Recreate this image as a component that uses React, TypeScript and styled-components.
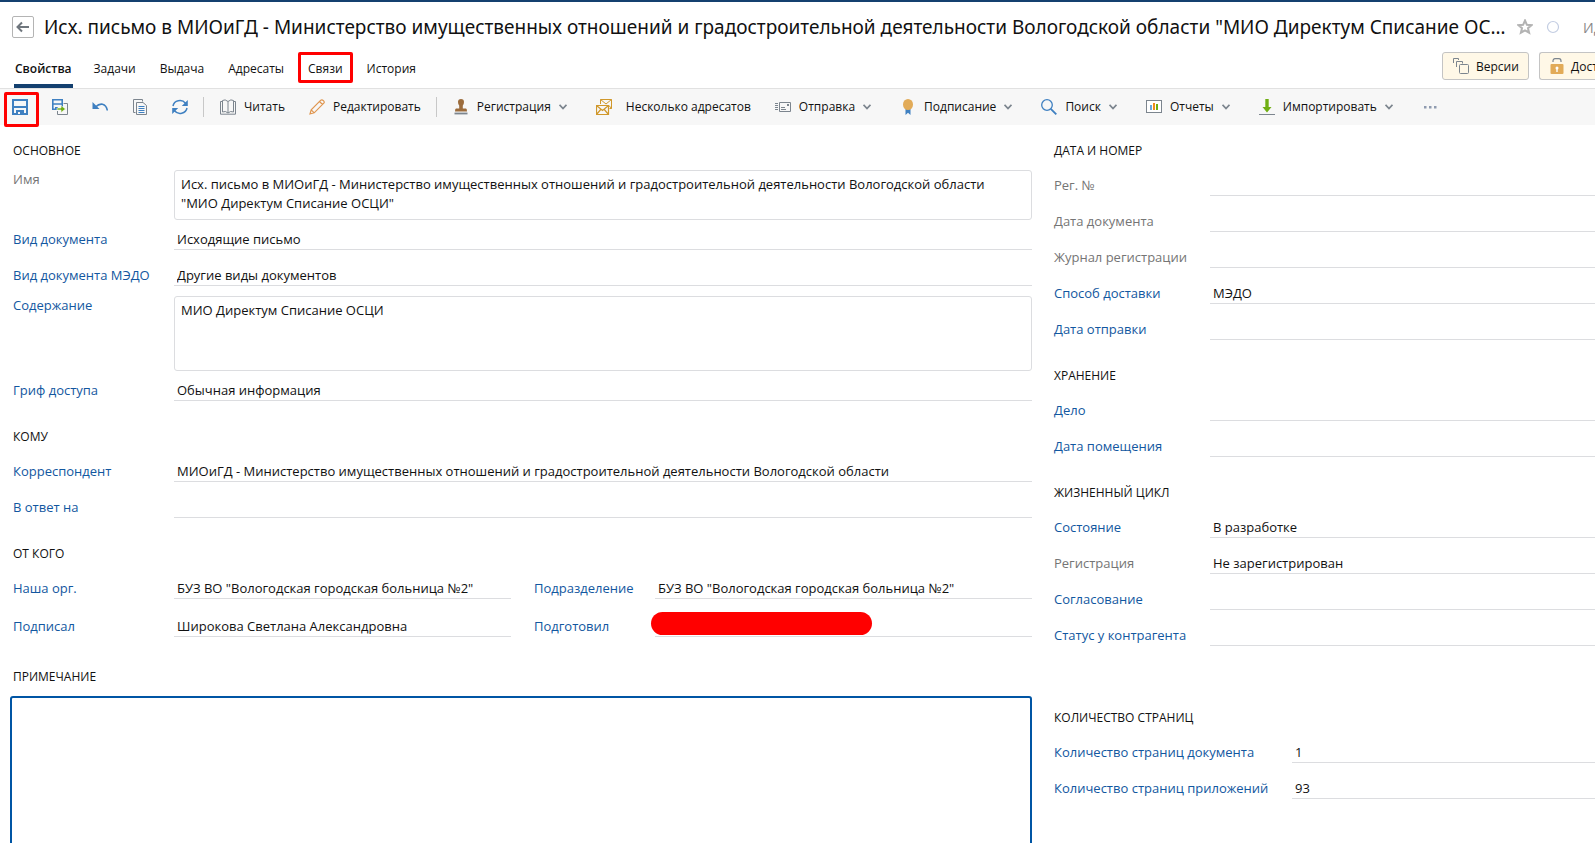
import React, { useId } from 'react';
import styled, { createGlobalStyle, css } from 'styled-components';

const GlobalStyle = createGlobalStyle`
  *, *::before, *::after { box-sizing: border-box; }
  html, body, #root { height: 100%; }
  body {
    margin: 0;
    overflow: hidden;
    background: #fff;
    color: #111;
    font-family: "Open Sans", "Noto Sans", sans-serif;
    font-size: 13px;
  }
  button, input, textarea { font: inherit; color: inherit; margin: 0; }
  button { cursor: pointer; }
`;

const Page = styled.div`
  min-height: 100%;
  border-top: 2px solid #14406f;
`;

const TitleRow = styled.header`
  display: flex;
  align-items: center;
  height: 50px;
  padding-left: 12px;
`;

const BackButton = styled.button`
  flex: none;
  display: grid;
  place-items: center;
  width: 22px;
  height: 22px;
  padding: 0;
  border: 1px solid #b4b4b4;
  border-radius: 2px;
  background: #fff;
`;

const Title = styled.h1`
  flex: 1;
  min-width: 0;
  margin: 0 0 0 10px;
  overflow: hidden;
  white-space: nowrap;
  font-family: "Noto Sans", "Open Sans", sans-serif;
  font-size: 19px;
  font-weight: 400;
  line-height: 26px;
`;

const PlainButton = styled.button`
  flex: none;
  display: grid;
  place-items: center;
  width: 16px;
  height: 16px;
  padding: 0;
  border: 0;
  background: none;
`;

const TitleMarks = styled.div`
  flex: none;
  display: flex;
  align-items: center;
  gap: 12px;
`;

const DocumentId = styled.span`
  width: 12px;
  margin-left: 10px;
  overflow: hidden;
  white-space: nowrap;
  color: #888;
  font-size: 14px;
`;

const TabRow = styled.div`
  display: flex;
  justify-content: space-between;
  height: 37px;
  padding-left: 3px;
  border-bottom: 1px solid #e1e1e1;
`;

const TabList = styled.nav`
  display: flex;
`;

const Tab = styled.button<{ $active?: boolean }>`
  position: relative;
  display: flex;
  height: 36px;
  padding: 0 ${p => (p.$active ? '9px' : '11px')} 0 11px;
  border: 0;
  background: none;
  font-size: 12px;
  line-height: 33px;
  font-weight: ${p => (p.$active ? 600 : 400)};

  span {
    padding: 0 1px;
    border-bottom: 4px solid ${p => (p.$active ? '#14406f' : 'transparent')};
  }
`;

const Highlight = styled.i<{ $inset: string }>`
  position: absolute;
  z-index: 2;
  inset: ${p => p.$inset};
  border: 3px solid #f00;
  border-radius: 2px;
  pointer-events: none;
`;

const HeaderActions = styled.div`
  display: flex;
  gap: 10px;
`;

const ActionButton = styled.button<{ $cut?: boolean }>`
  display: flex;
  align-items: center;
  gap: 7px;
  width: ${p => (p.$cut ? '56px' : '87px')};
  height: 28px;
  padding: 0 0 0 10px;
  overflow: hidden;
  border: 1px solid #c4c4c4;
  border-radius: 3px;
  background: #fff8e7;
  font-size: 12px;
  white-space: nowrap;
  ${p =>
    p.$cut &&
    css`
      border-right: 0;
      border-top-right-radius: 0;
      border-bottom-right-radius: 0;
    `}

  svg { flex: none; }
`;

const Toolbar = styled.div`
  display: flex;
  align-items: center;
  height: 36px;
  background: #f7f7f7;
`;

const IconButton = styled.button`
  position: relative;
  flex: none;
  display: grid;
  place-items: center;
  width: 40px;
  height: 36px;
  padding: 0;
  border: 0;
  background: none;
`;

const ToolButton = styled.button<{ $wideGap?: boolean }>`
  flex: none;
  display: flex;
  align-items: center;
  gap: 8px;
  height: 36px;
  padding: 0 12px;
  border: 0;
  background: none;
  font-size: 12px;
  line-height: 20px;
  white-space: nowrap;

  > svg:first-child { flex: none; margin-right: ${p => (p.$wideGap ? '6px' : '0')}; }
  > svg:last-child { flex: none; margin-right: 5px; }
`;

const Divider = styled.span`
  flex: none;
  width: 1px;
  height: 20px;
  margin: 0 4px 0 3px;
  background: #c8c8c8;
`;

const Form = styled.main`
  display: grid;
  grid-template-columns: minmax(0, 1019fr) minmax(0, 541fr);
  gap: 22px;
  padding: 16px 0 0 13px;
`;

const SectionTitle = styled.h2<{ $before?: number }>`
  height: 19px;
  margin: ${p => p.$before ?? 26}px 0 0;
  font-size: 12px;
  font-weight: 400;
  line-height: 20px;
  text-transform: uppercase;
`;

const Row = styled.div<{ $label: number; $height?: number }>`
  display: grid;
  grid-template-columns: ${p => p.$label}px minmax(0, 1fr);
  align-items: end;
  height: ${p => p.$height ?? 36}px;
`;

const Label = styled.label<{ $muted?: boolean }>`
  color: ${p => (p.$muted ? '#757575' : '#1257a0')};
  line-height: 20px;
  padding-bottom: 1px;
  white-space: nowrap;
`;

const Input = styled.input`
  width: 100%;
  height: 21px;
  padding: 0 3px;
  border: 0;
  border-bottom: 1px solid #dcdde0;
  border-radius: 0;
  background: none;
  line-height: 20px;
  outline: none;
`;

const AreaRow = styled.div<{ $before: number }>`
  display: grid;
  grid-template-columns: 161px minmax(0, 1fr);
  align-items: start;
  padding-top: ${p => p.$before}px;

  ${Label} { line-height: 18px; }
`;

const Area = styled.textarea<{ $height: number }>`
  display: block;
  width: 100%;
  height: ${p => p.$height}px;
  padding: 4px 24px 0 6px;
  border: 1px solid #dcdde0;
  border-radius: 3px;
  background: #fff;
  line-height: 19px;
  resize: none;
  overflow: hidden;
  outline: none;
`;

const Pair = styled.div`
  display: grid;
  grid-template-columns: minmax(0, 1fr) minmax(0, 1fr);
  gap: 23px;
`;

const Covered = styled.div`
  position: relative;
`;

const Redaction = styled.i`
  position: absolute;
  left: 117px;
  bottom: 2px;
  width: 221px;
  height: 23px;
  border-radius: 12px;
  background: #f00;
`;

const NoteArea = styled(Area)`
  width: calc(100% + 3px);
  margin: 10px 0 0 -3px;
  border: 2px solid #0055a4;
`;

type FieldProps = {
  label: string;
  value?: string;
  muted?: boolean;
  labelWidth?: number;
  height?: number;
};

function Field({ label, value = '', muted, labelWidth = 161, height }: FieldProps) {
  const id = useId();
  return (
    <Row $label={labelWidth} $height={height}>
      <Label htmlFor={id} $muted={muted}>{label}</Label>
      <Input id={id} defaultValue={value} readOnly={muted} />
    </Row>
  );
}

function AreaField({ label, value, muted, before, height }: FieldProps & { before: number; height: number }) {
  const id = useId();
  return (
    <AreaRow $before={before}>
      <Label htmlFor={id} $muted={muted}>{label}</Label>
      <Area id={id} defaultValue={value} readOnly={muted} $height={height} />
    </AreaRow>
  );
}

const Svg = ({ w = 16, h = 16, children }: { w?: number; h?: number; children: React.ReactNode }) => (
  <svg width={w} height={h} viewBox={`0 0 ${w} ${h}`} fill="none" aria-hidden="true">{children}</svg>
);

const BLUE = '#3f80c1';
const GREY = '#7c858e';

const BackIcon = () => (
  <Svg w={14} h={12}><path d="M13 6H2M6 1.5L1.5 6L6 10.5" stroke="#6f767d" strokeWidth="2" /></Svg>
);
const StarIcon = () => (
  <Svg><path d="M8 1.500l1.900 4.300 4.600.4-3.500 3 1.100 4.500L8 11.300l-4.100 2.400 1.100-4.500L1.500 6.200l4.600-.4z" stroke="#b3b3b3" strokeWidth="2" /></Svg>
);
const CircleIcon = () => <Svg><circle cx="8" cy="8" r="5.500" stroke="#c3cde2" strokeWidth="1.200" /></Svg>;
const VersionsIcon = () => (
  <Svg>
    <path d="M.5 5V.5H5.500V2" stroke={GREY} />
    <path d="M3.500 9V3.500H9.500V5.500" stroke={GREY} />
    <rect x="6.500" y="6.500" width="9" height="9" rx="1" stroke={GREY} />
  </Svg>
);
const LockIcon = () => (
  <Svg w={14}>
    <path d="M3 4V3Q3 .700 5 .700H9Q11 .700 11 3V4" stroke={GREY} strokeWidth="1.200" />
    <rect x=".5" y="6" width="13" height="10" rx="1" fill="#e2ab58" />
    <circle cx="7" cy="10" r="1.500" fill="#fff" /><path d="M7 10v4" stroke="#fff" strokeWidth="1.400" />
  </Svg>
);
const SaveIcon = () => (
  <Svg>
    <path d="M1 1H15V15H1Z" stroke={BLUE} strokeWidth="2" />
    <path d="M1 8H15" stroke={BLUE} strokeWidth="2" />
    <path d="M4 15V11H12V15Z" fill={BLUE} /><path d="M6 13H8V15H6Z" fill="#f7f7f7" />
  </Svg>
);
const SaveCloseIcon = () => (
  <Svg>
    <path d="M11.500 4.500H15.500V15.500H5.500V12" stroke={GREY} />
    <path d="M.800.800H10.200V10.200H.800ZM.800 5H10.200" stroke={BLUE} strokeWidth="1.600" />
    <path d="M3 8H6V11H3Z" fill={BLUE} />
    <path d="M5 9H9V6.500L13.500 10L9 13.500V11H5Z" fill="#6fae12" stroke="#f7f7f7" strokeWidth=".6" />
  </Svg>
);
const UndoIcon = () => (
  <Svg><path d="M.5 3V10H7.500Z" fill={BLUE} /><path d="M3.500 8Q7 4.500 10.500 5.200Q14.500 6.200 15.300 11.500" stroke={BLUE} strokeWidth="1.600" /></Svg>
);
const CopyIcon = () => (
  <Svg>
    <path d="M3.500 13.500H1.500V.5H10.500V2.500" stroke={GREY} />
    <path d="M4.500 3.500H11L14.500 6.500V15.500H4.500Z" stroke={GREY} />
    <path d="M6.500 7.500H12.500M6.500 9.500H12.500M6.500 11.500H12.500M6.500 13.500H12.500" stroke={BLUE} />
  </Svg>
);
const RefreshIcon = () => (
  <Svg>
    <path d="M1 7A7 6.500 0 0 1 13.500 4.200M15 9A7 6.500 0 0 1 2.500 11.800" stroke={BLUE} strokeWidth="1.500" />
    <path d="M15.800 1V7H9.800ZM.2 15V9H6.200Z" fill={BLUE} />
  </Svg>
);
const BookIcon = () => (
  <Svg>
    <path d="M8 2.500Q5 -.2 2.500 1.500V13Q5.500 11.500 8 14Q10.500 11.500 13.500 13V1.500Q11 -.2 8 2.500V14" stroke={GREY} />
    <path d="M2.500 2.500H.5V15.200H15.500V2.500H13.500" stroke={GREY} />
  </Svg>
);
const PencilIcon = () => (
  <Svg><path d="M1 15L2.200 10.800L11.800 1.200Q13 .2 14.400 1.600Q15.800 3 14.800 4.200L5.200 13.800ZM2.200 10.800L5.200 13.800M10.500 2.500L13.500 5.500" stroke="#e0964f" strokeWidth="1.200" /></Svg>
);
const StampIcon = () => (
  <Svg>
    <path d="M5 3Q5 0 8 0Q11 0 11 3Q11 5 9.800 6.500V9.500H13Q14 9.500 14 12.500H2Q2 9.500 3 9.500H6.200V6.500Q5 5 5 3Z" fill="#9c6c3c" />
    <path d="M1.500 14.500H14.500" stroke={GREY} strokeWidth="1.800" />
  </Svg>
);
const MailsIcon = () => (
  <Svg>
    <path d="M4.500 5V.5H15.500V9.500H13.500M4.500 .5L10 5L15.500 .5M15.500 9.500L13 6.500" stroke="#d0982c" />
    <path d="M.5 6.500H12.500V15.500H.5ZM.5 6.500L6.500 11.500L12.500 6.500M.5 15.500L4.700 10.500M12.500 15.500L8.300 10.500" stroke="#d0982c" strokeWidth="1.200" />
  </Svg>
);
const SendIcon = () => (
  <Svg>
    <path d="M4.500 3.500H15.500V12.500H4.500Z" stroke={GREY} />
    <path d="M0 4.500H3M0 6.500H3M0 8.500H3M0 10.500H3M6 8.500H10M6 10.500H11" stroke={GREY} />
    <path d="M12 5H14V7H12Z" fill={GREY} />
  </Svg>
);
const MedalIcon = () => (
  <Svg><path d="M5.500 9H10.500V16L8 13.800L5.500 16Z" fill={BLUE} /><ellipse cx="8" cy="5.500" rx="5" ry="5.500" fill="#e2ab58" /></Svg>
);
const SearchIcon = () => (
  <Svg><circle cx="6" cy="6" r="5.300" stroke={BLUE} strokeWidth="1.300" /><path d="M9.800 9.800L15.300 15.300" stroke={BLUE} strokeWidth="1.900" /></Svg>
);
const ReportsIcon = () => (
  <Svg>
    <rect x=".5" y="1.500" width="15" height="12" stroke={GREY} fill="#fff" />
    <path d="M4 6H6V11H4Z" fill="#6aa7dc" /><path d="M7 4H9V11H7Z" fill="#ef8d1b" /><path d="M10 5H12V11H10Z" fill="#6fae12" />
  </Svg>
);
const ImportIcon = () => (
  <Svg><path d="M6.300 0H9.700V8H12.500L8 13.500L3.500 8H6.300Z" fill="#6fae12" /><path d="M0 15.500H16" stroke={GREY} /></Svg>
);
const Chevron = () => (
  <Svg w={8} h={6}><path d="M.5 .8L4 4.500L7.500 .8" stroke="#7c858e" strokeWidth="1.800" /></Svg>
);
const DotsIcon = () => (
  <Svg><path d="M2 7h2.500v2.500H2zM7 7h2.500v2.500H7zM12 7h2.500v2.500H12z" fill="#8f9bb0" /></Svg>
);

const SUBJECT = 'Исх. письмо в МИОиГД - Министерство имущественных отношений и градостроительной деятельности Вологодской области "МИО Директум Списание ОС';
const ORG = 'БУЗ ВО "Вологодская городская больница №2"';

export default function App() {
  const noteTitle = useId();
  return (
    <Page>
      <GlobalStyle />
      <TitleRow>
        <BackButton aria-label="Назад"><BackIcon /></BackButton>
        <Title>{SUBJECT}…</Title>
        <TitleMarks>
          <PlainButton aria-label="В избранное"><StarIcon /></PlainButton>
          <PlainButton aria-label="Отметка"><CircleIcon /></PlainButton>
          <DocumentId>Ид</DocumentId>
        </TitleMarks>
      </TitleRow>

      <TabRow>
        <TabList>
          <Tab $active><span>Свойства</span></Tab>
          <Tab><span>Задачи</span></Tab>
          <Tab><span>Выдача</span></Tab>
          <Tab><span>Адресаты</span></Tab>
          <Tab><span>Связи</span><Highlight $inset="0 2px 5px" /></Tab>
          <Tab><span>История</span></Tab>
        </TabList>
        <HeaderActions>
          <ActionButton><VersionsIcon />Версии</ActionButton>
          <ActionButton $cut><LockIcon />Доступ</ActionButton>
        </HeaderActions>
      </TabRow>

      <Toolbar role="toolbar">
        <IconButton aria-label="Сохранить"><SaveIcon /><Highlight $inset="3px 1px -2px 4px" /></IconButton>
        <IconButton aria-label="Сохранить и закрыть"><SaveCloseIcon /></IconButton>
        <IconButton aria-label="Отменить"><UndoIcon /></IconButton>
        <IconButton aria-label="Копировать"><CopyIcon /></IconButton>
        <IconButton aria-label="Обновить"><RefreshIcon /></IconButton>
        <Divider />
        <ToolButton><BookIcon /><span>Читать</span></ToolButton>
        <ToolButton><PencilIcon /><span>Редактировать</span></ToolButton>
        <Divider />
        <ToolButton><StampIcon /><span>Регистрация</span><Chevron /></ToolButton>
        <ToolButton $wideGap><MailsIcon /><span>Несколько адресатов</span></ToolButton>
        <ToolButton><SendIcon /><span>Отправка</span><Chevron /></ToolButton>
        <ToolButton><MedalIcon /><span>Подписание</span><Chevron /></ToolButton>
        <ToolButton><SearchIcon /><span>Поиск</span><Chevron /></ToolButton>
        <ToolButton><ReportsIcon /><span>Отчеты</span><Chevron /></ToolButton>
        <ToolButton><ImportIcon /><span>Импортировать</span><Chevron /></ToolButton>
        <IconButton aria-label="Ещё"><DotsIcon /></IconButton>
      </Toolbar>

      <Form>
        <div>
          <SectionTitle $before={0}>Основное</SectionTitle>
          <AreaField label="Имя" value={SUBJECT + 'ЦИ"'} muted before={10} height={50} />
          <Field label="Вид документа" value="Исходящие письмо" height={30} />
          <Field label="Вид документа МЭДО" value="Другие виды документов" />
          <AreaField label="Содержание" value="МИО Директум Списание ОСЦИ" before={10} height={75} />
          <Field label="Гриф доступа" value="Обычная информация" height={30} />

          <SectionTitle>Кому</SectionTitle>
          <Field label="Корреспондент" value="МИОиГД - Министерство имущественных отношений и градостроительной деятельности Вологодской области" />
          <Field label="В ответ на" />

          <SectionTitle>От кого</SectionTitle>
          <Pair>
            <Field label="Наша орг." value={ORG} />
            <Field label="Подразделение" value={ORG} labelWidth={121} />
          </Pair>
          <Pair>
            <Field label="Подписал" value="Широкова Светлана Александровна" height={38} />
            <Covered>
              <Field label="Подготовил" labelWidth={121} height={38} />
              <Redaction />
            </Covered>
          </Pair>

          <SectionTitle id={noteTitle} $before={30}>Примечание</SectionTitle>
          <NoteArea aria-labelledby={noteTitle} $height={180} />
        </div>

        <div>
          <SectionTitle $before={0}>Дата и номер</SectionTitle>
          <Field label="Рег. №" muted labelWidth={156} />
          <Field label="Дата документа" muted labelWidth={156} />
          <Field label="Журнал регистрации" muted labelWidth={156} />
          <Field label="Способ доставки" value="МЭДО" labelWidth={156} />
          <Field label="Дата отправки" labelWidth={156} />

          <SectionTitle>Хранение</SectionTitle>
          <Field label="Дело" labelWidth={156} />
          <Field label="Дата помещения" labelWidth={156} />

          <SectionTitle>Жизненный цикл</SectionTitle>
          <Field label="Состояние" value="В разработке" labelWidth={156} />
          <Field label="Регистрация" value="Не зарегистрирован" muted labelWidth={156} />
          <Field label="Согласование" labelWidth={156} />
          <Field label="Статус у контрагента" labelWidth={156} />

          <SectionTitle $before={62}>Количество страниц</SectionTitle>
          <Field label="Количество страниц документа" value="1" labelWidth={238} />
          <Field label="Количество страниц приложений" value="93" labelWidth={238} />
        </div>
      </Form>
    </Page>
  );
}
